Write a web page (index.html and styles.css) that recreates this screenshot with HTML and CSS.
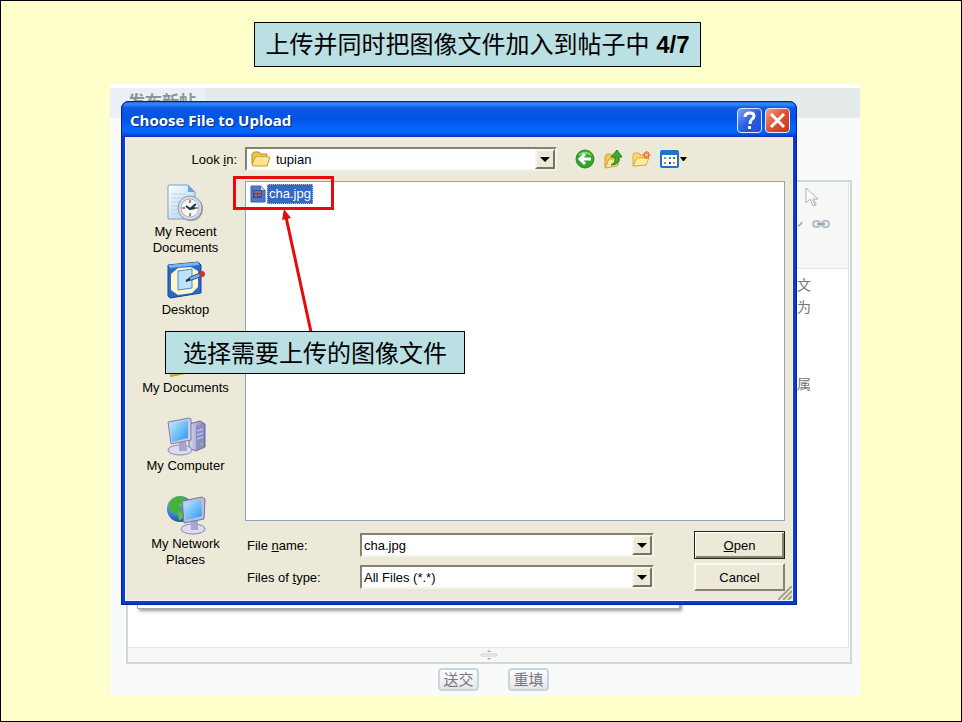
FILE: index.html
```html
<!DOCTYPE html>
<html lang="zh-CN">
  <head>
    <meta charset="UTF-8" />
    <meta name="viewport" content="width=device-width, initial-scale=1.0" />
    <title>上传并同时把图像文件加入到帖子中</title>
    <link rel="stylesheet" href="styles.css">
  </head>
  <body>
    <div class="slide">
      <div class="slide-header">
        <h1 class="slide-title">上传并同时把图像文件加入到帖子中 <b>4/7</b></h1>
      </div>

      <div class="forum-page">
        <!-- 发帖页面 -->
        <div class="forum-tabs">
          <div class="forum-tab">发布新帖</div>
        </div>

        <div class="editor">
          <div class="editor-toolbar">
            <svg class="tool-cursor" width="14" height="20" viewBox="0 0 14 20">
              <path d="M1 1v15l4-4 3 7 3-1-3-6h5z" fill="#fafbfc" stroke="#aab3c1" />
              <path d="M7 13l3 6 2-1-3-6" fill="#c3c9d3" />
            </svg>
            <div class="tool-row">
              <svg width="6" height="6" viewBox="0 0 6 6">
                <path d="M1 5q3-1 4-4" fill="none" stroke="#aab0bb" stroke-width="2" />
              </svg>
              <svg width="20" height="10" viewBox="0 0 20 10">
                <g fill="none" stroke="#b4bfcd" stroke-width="2">
                  <rect x="2" y="2" width="7" height="6" rx="3" />
                  <rect x="11" y="2" width="7" height="6" rx="3" />
                  <path d="M6 5h8" stroke="#98a5b7" />
                </g>
              </svg>
            </div>
          </div>
          <div class="editor-text">
            <p>文<br>为</p>
            <p>属</p>
          </div>
          <div class="editor-resize">
            <svg width="18" height="12" viewBox="0 0 18 12">
              <path d="M7 3l2-2 2 2zM7 9l2 2 2-2z" fill="#a5a5a5" />
              <rect x="1" y="5" width="16" height="2" rx="1" fill="#fff" stroke="#cacaca" />
            </svg>
          </div>
        </div>

        <div class="forum-actions">
          <button type="submit">送交</button>
          <button type="reset">重填</button>
        </div>

        <div class="upload-popup"></div>

        <!-- 选择文件对话框 -->
        <div class="dialog">
          <div class="dialog-title">
            <h2>Choose File to Upload</h2>
            <button class="title-btn help" aria-label="Help">
              <svg width="25" height="25" viewBox="0 0 25 25">
                <path d="M8 9q0-4 5-4 4 0 4 3 0 2-2 3-2 2-2 5" fill="none" stroke="#fff" stroke-width="3" />
                <rect x="11" y="18" width="3" height="3" fill="#fff" />
              </svg>
            </button>
            <button class="title-btn close" aria-label="Close">
              <svg width="25" height="25" viewBox="0 0 25 25">
                <path d="M6 6l13 13M19 6L6 19" stroke="#fff" stroke-width="3" />
              </svg>
            </button>
          </div>

          <div class="dialog-body">
            <label class="look-label" for="look-in">Look <u>i</u>n:</label>
            <div class="look-row">
              <div class="combo look-combo">
                <svg width="20" height="18" viewBox="0 0 20 18">
                  <path d="M1 14V4l2-2h5l2 2h6v10z" fill="#efc44c" stroke="#b98d20" />
                  <path d="M1 15l3-8h15l-3 9H2z" fill="#fde58b" stroke="#c59b2b" />
                  <path d="M5 8h12" stroke="#fff6c9" />
                </svg>
                <select id="look-in">
                  <option>tupian</option>
                </select>
                <span class="combo-arrow"></span>
              </div>
              <div class="nav-tools">
                <button aria-label="Back">
                  <svg width="20" height="20" viewBox="0 0 20 20">
                    <circle cx="10" cy="10" r="9" fill="#34a52c" stroke="#2a8a2a" />
                    <path d="M3 7a8 8 0 0 1 14 0q-7-4-14 0z" fill="#8bd47a" />
                    <path d="M16 10H6M10 5l-5 5 5 5" fill="none" stroke="#fff" stroke-width="3" />
                  </svg>
                </button>
                <button aria-label="Up One Level">
                  <svg width="20" height="20" viewBox="0 0 20 20">
                    <path d="M2 18V7l2-2h4l1 2h6v9z" fill="#f0c95c" stroke="#cfa23a" />
                    <path d="M2 19l4-9h11l-3 7z" fill="#fde897" stroke="#cfa23a" />
                    <path d="M8 16q5-2 4-8H8l6-7 5 7h-3q1 8-8 8z" fill="#3bac33" stroke="#23801f" />
                  </svg>
                </button>
                <button aria-label="Create New Folder">
                  <svg width="20" height="20" viewBox="0 0 20 20">
                    <path d="M2 17V5l2-1h4l1 2h6v10z" fill="#f6d573" stroke="#d9ae45" />
                    <path d="M2 17l4-8h12l-3 7z" fill="#fdeba4" stroke="#d9ae45" />
                    <path d="M15.500 2v8M11.500 6h8M13 3.500l5 5M18 3.500l-5 5" stroke="#f2622e" stroke-width="1.500" />
                    <circle cx="15.500" cy="6" r="1.500" fill="#ffd27c" />
                  </svg>
                </button>
                <button aria-label="View Menu">
                  <svg width="28" height="20" viewBox="0 0 28 20">
                    <rect x="2" y="2" width="17" height="16" rx="1" fill="#fff" stroke="#2272c5" stroke-width="2" />
                    <path d="M2 4h17" stroke="#2272c5" stroke-width="4" />
                    <path d="M5 8h2v2H5z" fill="#8f93b5" />
                    <path d="M10 8h2v2h-2z" fill="#3c7cc9" />
                    <path d="M14 8h2v2h-2z" fill="#29902f" />
                    <path d="M5 13h2v2H5z" fill="#e0704c" />
                    <path d="M10 13h2v2h-2z" fill="#263f91" />
                    <path d="M14 13h2v2h-2z" fill="#c89b26" />
                    <path d="M21 8h7l-3 4h-1z" fill="#000" />
                  </svg>
                </button>
              </div>
            </div>

            <div class="places">
              <button class="place">
                <svg width="40" height="40" viewBox="0 0 40 40">
                  <defs>
                    <linearGradient id="paper" x1="0" y1="0" x2="1" y2="1">
                      <stop offset="0" stop-color="#fff" />
                      <stop offset="1" stop-color="#a9cdf2" />
                    </linearGradient>
                    <linearGradient id="screen" x1="0" y1="0" x2="1" y2="1">
                      <stop offset="0" stop-color="#bdeeff" />
                      <stop offset="1" stop-color="#2b93ee" />
                    </linearGradient>
                    <linearGradient id="case" x1="0" y1="0" x2="1" y2="0">
                      <stop offset="0" stop-color="#d9daf0" />
                      <stop offset="1" stop-color="#7c7db5" />
                    </linearGradient>
                    <radialGradient id="globe" cx="0.35" cy="0.3" r="0.8">
                      <stop offset="0" stop-color="#7bc8ff" />
                      <stop offset="1" stop-color="#0a3fb0" />
                    </radialGradient>
                  </defs>
                  <path d="M2 36V3l1-1h19l7 7v27z" fill="url(#paper)" stroke="#7f9fca" />
                  <path d="M22 2l7 7h-7z" fill="#6fa5df" />
                  <path d="M5 11h15M5 15h13M5 19h9M5 23h7M5 27h6M5 31h8" stroke="#b5d3f2" />
                  <circle cx="25" cy="26" r="12" fill="#9298a4" />
                  <circle cx="24" cy="25" r="12" fill="#d7dbe4" stroke="#8c95a6" />
                  <circle cx="24" cy="25" r="9" fill="#f2faff" stroke="#9fb3c9" />
                  <path d="M24 17v3M24 30v3M16 25h3M29 25h3" stroke="#e07a3c" stroke-width="2" />
                  <path d="M30 21l-6 5-4-3M24 26l5-1" fill="none" stroke="#173747" stroke-width="2" />
                </svg>
                <span>My Recent Documents</span>
              </button>
              <button class="place">
                <svg width="40" height="40" viewBox="0 0 40 40">
                  <path d="M2 4l30-3 3 3v28L4 37l-2-2z" fill="#2b6bc4" stroke="#17468f" />
                  <path d="M2 4l30-3 1 3L4 7z" fill="#79b5ef" />
                  <path d="M5 13l7-6 13-1 7 4v16l-6 6-14 2-7-5z" fill="#fff6cf" />
                  <path d="M12 10l14-2v19l-14 2z" fill="#bfe1fb" stroke="#4a8ace" />
                  <path d="M20 20l4-4 10-4 2 3-10 4z" fill="#76b1e6" stroke="#26568f" />
                  <path d="M20 20l4-2" stroke="#1c2f4a" stroke-width="2" />
                  <circle cx="36" cy="13" r="3" fill="#c0392b" />
                </svg>
                <span>Desktop</span>
              </button>
              <button class="place">
                <svg width="40" height="40" viewBox="0 0 40 40">
                  <path d="M3 8h12l3 3h16v20L5 37z" fill="#f2cd5c" stroke="#b98d20" />
                  <path d="M9 6h19v22H9z" fill="#fff" stroke="#9fb3c9" />
                  <path d="M3 16l31-3v18L5 37z" fill="#f7dd7c" />
                  <path d="M4 37l30-6" stroke="#c9a02c" stroke-width="2" />
                </svg>
                <span>My Documents</span>
              </button>
              <button class="place">
                <svg width="40" height="40" viewBox="0 0 40 40">
                  <path d="M23 7l11-3 5 3v23l-9 4-7-3z" fill="url(#case)" stroke="#6b6ca5" />
                  <path d="M30 9v25l8-4V7z" fill="#8c8dc4" />
                  <path d="M31 14l6-2M31 18l6-2M31 22l6-2" stroke="#d5d6f2" />
                  <rect x="34" y="26" width="3" height="2" fill="#5fd35a" />
                  <ellipse cx="14" cy="33" rx="12" ry="5" fill="#dcdcf0" stroke="#8586b0" />
                  <path d="M13 22h7l1 12h-8z" fill="#a5a5d0" />
                  <path d="M2 5l21-4 2 1v21L5 27z" fill="#c9cde6" stroke="#7980ac" />
                  <path d="M4 7l18-4v18L6 25z" fill="url(#screen)" />
                </svg>
                <span>My Computer</span>
              </button>
              <button class="place">
                <svg width="40" height="40" viewBox="0 0 40 40">
                  <circle cx="14" cy="14" r="13" fill="url(#globe)" />
                  <path d="M6 4q7-5 14-1l-3 5-4 1 3 5-5 4 1 3-5-4-4-3V9z" fill="#45b531" />
                  <path d="M12 18l4-1 1 6-4 3z" fill="#58c33b" />
                  <ellipse cx="27" cy="34" rx="12" ry="5" fill="#dcdcf0" stroke="#8586b0" />
                  <path d="M25 24h7v11h-7z" fill="#a5a5d0" />
                  <path d="M16 6l20-4 3 2-1 20-20 4z" fill="#b9bedb" stroke="#6e759f" />
                  <path d="M18 8l17-3 1 16-16 4z" fill="url(#screen)" />
                </svg>
                <span>My Network Places</span>
              </button>
            </div>

            <div class="file-list">
              <a class="file" href="#cha">
                <svg width="16" height="18" viewBox="0 0 16 18">
                  <path d="M1 1h10l4 4v12H1z" fill="#4f79c4" stroke="#3a62ad" />
                  <path d="M11 1l4 4h-4z" fill="#bcd0f2" />
                  <rect x="3" y="5" width="9" height="8" fill="#3c5190" />
                  <path d="M4 6h7v2H4zM5 9h2v3H5zM8 9h3v2H8z" fill="#a4626c" />
                </svg>
                <span>cha.jpg</span>
              </a>
            </div>

            <form class="file-form">
              <label for="file-name">File <u>n</u>ame:</label>
              <div class="combo">
                <input id="file-name" type="text" value="cha.jpg">
                <span class="combo-arrow"></span>
              </div>
              <button class="xp-btn default" type="button"><u>O</u>pen</button>
              <label for="file-type">Files of <u>t</u>ype:</label>
              <div class="combo">
                <select id="file-type">
                  <option>All Files (*.*)</option>
                </select>
                <span class="combo-arrow"></span>
              </div>
              <button class="xp-btn" type="button">Cancel</button>
            </form>
          </div>
          <svg class="grip" width="14" height="14" viewBox="0 0 14 14">
            <path d="M0 14L14 0M5 14l9-9M10 14l4-4" stroke="#a5a28f" stroke-width="2" />
          </svg>
        </div>

        <!-- 标注 -->
        <div class="mark-box"></div>
        <svg class="mark-arrow" width="40" height="126" viewBox="0 0 40 126">
          <path d="M34 124L9 9" stroke="#e60b0b" stroke-width="3" />
          <path d="M7 1l7 9-9 2z" fill="#e60b0b" />
        </svg>
        <div class="mark-note">选择需要上传的图像文件</div>
      </div>
    </div>
  </body>
</html>
```

FILE: styles.css
```css
* {
  margin: 0;
  padding: 0;
  box-sizing: border-box;
}

body {
  font-family: "Liberation Sans", "Noto Sans CJK SC", sans-serif;
  font-size: 13px;
  color: #000;
}

button,
input,
select {
  font: inherit;
  color: inherit;
  border: none;
  background: none;
}

svg {
  display: block;
  flex-shrink: 0;
}

.slide {
  min-height: 100vh;
  display: flex;
  flex-direction: column;
  background: #ffffcc;
  border: 1px solid #000;
  padding: 21px 101px 25px 109px;
}

.slide-header {
  display: flex;
  justify-content: center;
  padding-right: 15px;
  margin-bottom: 17px;
}

.slide-title {
  height: 45px;
  line-height: 43px;
  padding: 0 10px;
  background: #bbe0e3;
  border: 1px solid #000;
  font-size: 24px;
  font-weight: 400;
  white-space: nowrap;
}

/* 发帖页面 */
.forum-page {
  position: relative;
  flex: 1;
  display: flex;
  flex-direction: column;
  background: #f9fbfa;
  border-top: 4px solid #fff;
}

.forum-tabs {
  height: 30px;
  background: #e5eaea;
}

.forum-tab {
  width: 96px;
  height: 30px;
  padding-left: 18px;
  line-height: 30px;
  background: #ebf0f7;
  color: #8d9499;
  font-size: 17px;
  font-weight: 700;
  white-space: nowrap;
}

.editor {
  flex: 1;
  display: flex;
  flex-direction: column;
  margin: 62px 8px 0 16px;
  padding-right: 1px;
  border: 2px solid #cfd8da;
}

.editor-toolbar {
  height: 87px;
  display: flex;
  flex-direction: column;
  align-items: flex-end;
  gap: 12px;
  padding: 5px 17px 0 0;
  background: #f7f7f5;
  border-right: 1px solid #dfe4e5;
  border-bottom: 1px solid #dfe4e5;
}

.tool-cursor {
  margin-right: 12px;
}

.tool-row {
  display: flex;
  align-items: center;
  gap: 8px;
}

.editor-text {
  flex: 1;
  padding: 5px 37px 0 0;
  background: #fff;
  border-right: 1px solid #dfe4e5;
  color: #777;
  font-size: 14px;
  line-height: 22px;
  text-align: right;
}

.editor-text p {
  margin-bottom: 55px;
}

.editor-resize {
  height: 15px;
  display: flex;
  align-items: center;
  justify-content: center;
  background: #f7f7f5;
  border-top: 1px solid #e3e6e7;
}

.forum-actions {
  display: flex;
  justify-content: center;
  gap: 29px;
  padding: 4px 0 5px 17px;
}

.forum-actions button {
  width: 41px;
  height: 23px;
  border: 2px solid #c9d6d9;
  border-radius: 4px;
  background: linear-gradient(#fff, #e4e4ec);
  color: #777;
  font-size: 15px;
  line-height: 19px;
}

.upload-popup {
  position: absolute;
  left: 27px;
  right: 180px;
  top: 400px;
  height: 121px;
  background: #fff;
  border: 1px solid #aaa;
  box-shadow: 2px 2px 3px rgba(0, 0, 0, 0.4);
}

/* 对话框 */
.dialog {
  position: absolute;
  left: 11px;
  right: 63px;
  top: 13px;
  background: #ece9d8;
  border: 4px solid #0a3bd6;
  border-top: none;
  border-radius: 8px 8px 0 0;
  outline: 1px solid #0a1fa0;
  outline-offset: -1px;
}

.dialog-title {
  height: 36px;
  display: flex;
  align-items: center;
  gap: 3px;
  margin: 0 -4px;
  padding: 3px 7px 0 9px;
  border-radius: 8px 8px 0 0;
  border-bottom: 1px solid #0a36b8;
  background: linear-gradient(#0b47c0, #3a8cf5 8%, #0a58e6 20%, #0353e3 50%, #0566ff 80%, #0560f5 90%, #0340cf);
}

.dialog-title h2 {
  flex: 1;
  color: #fff;
  font-family: "Open Sans", "Noto Sans", sans-serif;
  font-size: 15px;
  font-weight: 700;
  text-shadow: 1px 1px 1px #0a2a80;
}

.title-btn {
  width: 25px;
  height: 25px;
  display: flex;
  align-items: center;
  justify-content: center;
  border: 1px solid #dfe8ff;
  border-radius: 4px;
}

.title-btn.help {
  background: linear-gradient(135deg, #7da2f5, #2b5de4 50%, #1c50d8);
}

.title-btn.close {
  background: linear-gradient(135deg, #f0a088, #dd5130 50%, #c23b15);
}

.dialog-body {
  display: grid;
  grid-template-columns: 119px 1fr;
  row-gap: 10px;
  padding: 10px 7px 9px 0;
  border: 1px solid #f3f6fb;
  border-top: none;
}

.look-label {
  align-self: center;
  padding-right: 8px;
  text-align: right;
}

.look-row {
  display: flex;
  align-items: center;
  gap: 18px;
}

.combo {
  height: 24px;
  display: flex;
  align-items: center;
  background: #fff;
  border: 2px solid;
  border-color: #85826f #f5f3ea #f5f3ea #85826f;
}

.combo select,
.combo input {
  flex: 1;
  min-width: 0;
  height: 20px;
  padding-left: 2px;
  appearance: none;
  outline: none;
}

.look-combo {
  width: 312px;
  padding-left: 4px;
}

.look-combo select {
  padding-left: 5px;
}

.combo-arrow {
  width: 20px;
  height: 20px;
  display: flex;
  align-items: center;
  justify-content: center;
  flex-shrink: 0;
  background: #ece9d8;
  border: 2px solid;
  border-color: #f8f6ec #777462 #777462 #f8f6ec;
  pointer-events: none;
}

.combo-arrow::after {
  content: "";
  border: 5px solid transparent;
  border-top-color: #000;
  border-bottom: none;
}

.nav-tools {
  display: flex;
  gap: 8px;
}

.places {
  grid-row: 2 / 4;
  display: flex;
  flex-direction: column;
  align-items: center;
  padding-top: 2px;
}

.place {
  width: 96px;
  height: 78px;
  display: flex;
  flex-direction: column;
  align-items: center;
  gap: 1px;
  line-height: 16px;
}

.file-list {
  height: 340px;
  padding: 2px 4px;
  background: #fff;
  border: 1px solid #8ea5b8;
}

.file {
  display: inline-flex;
  align-items: center;
  gap: 1px;
  color: #fff;
  text-decoration: none;
}

.file span {
  height: 20px;
  line-height: 18px;
  padding: 0 1px;
  background: #316ac5;
  border: 1px dotted #d9b77a;
}

.file-form {
  display: grid;
  grid-template-columns: 113px 1fr 91px;
  align-items: center;
  row-gap: 4px;
  padding-left: 2px;
}

.file-form .combo {
  margin-right: 40px;
}

.xp-btn {
  height: 28px;
  background: #ece9d8;
  border: 2px solid;
  border-color: #fbfaf3 #85826f #85826f #fbfaf3;
}

.xp-btn.default {
  border: 1px solid #222;
  box-shadow: inset 1px 1px 0 #fff, inset -2px -2px 0 #85826f;
}

.grip {
  position: absolute;
  right: 1px;
  bottom: 1px;
}

/* 标注 */
.mark-box {
  position: absolute;
  left: 123px;
  top: 88px;
  width: 101px;
  height: 34px;
  border: 3px solid #e60b0b;
}

.mark-arrow {
  position: absolute;
  left: 167px;
  top: 120px;
}

.mark-note {
  position: absolute;
  left: 55px;
  top: 243px;
  height: 43px;
  line-height: 43px;
  padding: 0 17px;
  background: #bbe0e3;
  border: 1px solid #000;
  font-size: 24px;
  white-space: nowrap;
}
```
